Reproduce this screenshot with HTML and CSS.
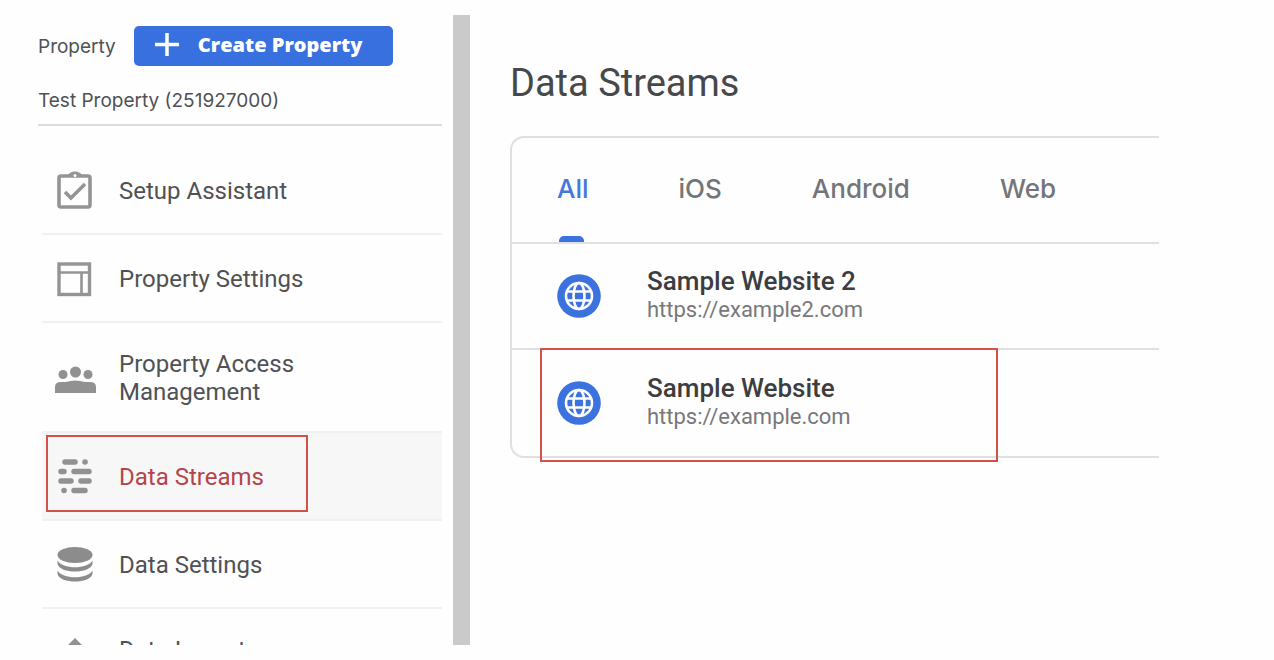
FILE: index.html
```
<!DOCTYPE html>
<html lang="en">
<head>
    <meta charset="UTF-8">
    <meta name="viewport" content="width=device-width, initial-scale=1.0">
    <title>Data Streams</title>
    <link rel="stylesheet" href="styles.css">
</head>
<body>
    <div class="page">
        <!-- Property column -->
        <aside class="sidebar">
            <div class="property-header">
                <span class="property-label">Property</span>
                <button class="create-btn" type="button">
                    <svg width="26" height="26" viewBox="0 0 26 26" aria-hidden="true"><path d="M13 1v23M1 12.500h24" fill="none" stroke="#fff" stroke-width="3.500"/></svg>
                    Create Property
                </button>
            </div>
            <div class="property-name">Test Property (251927000)</div>

            <nav class="menu">
                <a class="menu-item" href="#setup">
                    <svg class="menu-icon" viewBox="0 0 46 46" aria-hidden="true">
                        <rect x="7" y="9" width="31" height="31" rx="2" fill="none" stroke="#949494" stroke-width="3.600"/>
                        <path d="M16 9c1-6 13-6 14 0z" fill="#949494"/>
                        <circle cx="23" cy="8.500" r="1.500" fill="#fff"/>
                        <path d="M13 25l6 6 14-14" fill="none" stroke="#949494" stroke-width="3.600"/>
                    </svg>
                    <span>Setup Assistant</span>
                </a>
                <a class="menu-item" href="#settings">
                    <svg class="menu-icon" viewBox="0 0 46 46" fill="none" stroke="#949494" aria-hidden="true">
                        <rect x="7" y="9" width="30.500" height="30.500" stroke-width="3.400"/>
                        <path d="M7 17.500h31M29.500 17.500V40" stroke-width="2.600"/>
                    </svg>
                    <span>Property Settings</span>
                </a>
                <a class="menu-item" href="#access">
                    <svg class="menu-icon" viewBox="0 0 46 46" fill="#919191" aria-hidden="true">
                        <circle cx="11" cy="20.500" r="4.500"/>
                        <circle cx="23.500" cy="18" r="5.500"/>
                        <circle cx="36" cy="20.500" r="4.500"/>
                        <path d="M3 39v-6q0-5 6-5h5q9-3 19 0h5q6 0 6 5v6z"/>
                    </svg>
                    <span>Property Access Management</span>
                </a>
                <a class="menu-item active" href="#streams">
                    <svg class="menu-icon" viewBox="0 0 46 46" aria-hidden="true">
                        <path d="M13 9h10M33 9h.1M9 18.500h3M22 18.500h15M9 28h10M29 28h8M12 37.500h.1M22 37.500h11" fill="none" stroke="#919191" stroke-width="5.500" stroke-linecap="round"/>
                    </svg>
                    <span>Data Streams</span>
                </a>
                <a class="menu-item" href="#data-settings">
                    <svg class="menu-icon" viewBox="0 0 46 46" fill="#8c8c8c" aria-hidden="true">
                        <ellipse cx="23" cy="14" rx="17.500" ry="8"/>
                        <path d="M5.500 19.500C10 28.500 36 28.500 40.500 19.500v3.500C38 33 8 33 5.500 23z"/>
                        <path d="M5.500 29.500C10 38.500 36 38.500 40.500 29.500v3.500C38 43 8 43 5.500 33z"/>
                    </svg>
                    <span>Data Settings</span>
                </a>
                <a class="menu-item" href="#import">
                    <svg class="menu-icon" viewBox="0 0 46 46" fill="#919191" aria-hidden="true">
                        <path d="M23 12L9 26h8v10h12V26h8zM9 39h28v4H9z"/>
                    </svg>
                    <span>Data Import</span>
                </a>
            </nav>
        </aside>

        <!-- Streams -->
        <main class="content">
            <h1>Data Streams</h1>
            <section class="card">
                <div class="tabs" role="tablist">
                    <button class="tab selected" type="button" role="tab" aria-selected="true">All</button>
                    <button class="tab" type="button" role="tab" aria-selected="false">iOS</button>
                    <button class="tab" type="button" role="tab" aria-selected="false">Android</button>
                    <button class="tab" type="button" role="tab" aria-selected="false">Web</button>
                </div>
                <a class="stream" href="#sample-website-2">
                    <svg class="stream-icon" viewBox="0 0 44 44" aria-hidden="true">
                        <circle cx="22" cy="22" r="21.800" fill="#3b72de"/>
                        <g fill="none" stroke="#fff" stroke-width="2.600">
                            <circle cx="22" cy="22" r="13"/>
                            <ellipse cx="22" cy="22" rx="5.500" ry="13"/>
                            <path d="M10 17.500h24M10 26.500h24"/>
                        </g>
                    </svg>
                    <span class="stream-text">
                        <span class="stream-name">Sample Website 2</span>
                        <span class="stream-url">https://example2.com</span>
                    </span>
                </a>
                <a class="stream marked" href="#sample-website">
                    <svg class="stream-icon" viewBox="0 0 44 44" aria-hidden="true">
                        <circle cx="22" cy="22" r="21.800" fill="#3b72de"/>
                        <g fill="none" stroke="#fff" stroke-width="2.600">
                            <circle cx="22" cy="22" r="13"/>
                            <ellipse cx="22" cy="22" rx="5.500" ry="13"/>
                            <path d="M10 17.500h24M10 26.500h24"/>
                        </g>
                    </svg>
                    <span class="stream-text">
                        <span class="stream-name">Sample Website</span>
                        <span class="stream-url">https://example.com</span>
                    </span>
                </a>
            </section>
        </main>
    </div>
</body>
</html>
```
FILE: styles.css
```
*, *::after {
    box-sizing: border-box;
}
body {
    margin: 0;
    font-family: Roboto, Arial, sans-serif;
    background-color: #fefefe;
    color: #505154;
}
a {
    color: inherit;
    text-decoration: none;
}
button {
    border: none;
    cursor: pointer;
}
.page {
    display: flex;
    height: 100vh;
    padding: 15px 9% 15px 0;
}

/* Sidebar */
.sidebar {
    flex: 0 0 470px;
    padding: 11px 11px 0 38px;
    border-right: 17px solid #cacaca;
    overflow: hidden;
}
.property-header {
    display: flex;
    align-items: center;
    gap: 18px;
    font-family: Inter, sans-serif;
    font-size: 19px;
}
.create-btn {
    display: flex;
    align-items: center;
    gap: 18px;
    height: 40px;
    padding: 0 30px 3px 20px;
    border-radius: 5px;
    background-color: #3870e0;
    color: #fff;
    font-family: "Open Sans", sans-serif;
    font-size: 20px;
    font-weight: 800;
}
.property-name {
    padding: 20px 0 8px;
    border-bottom: 2px solid #dcdcdc;
    font-family: Inter, sans-serif;
    font-size: 19px;
    line-height: 30px;
}
.menu {
    margin: 21px 0 0 4px;
}
.menu-item {
    position: relative;
    display: flex;
    align-items: center;
    gap: 21px;
    min-height: 88px;
    padding: 27px 100px 25px 10px;
    border-bottom: 2px solid #f0f0f0;
    font-size: 24px;
    line-height: 28px;
}
.menu-item:last-child {
    padding-top: 24px;
    padding-bottom: 28px;
}
.menu-icon {
    flex: none;
    width: 46px;
    height: 46px;
    margin: -11px 0 -9px;
}
.menu-item.active {
    background-color: #f7f7f7;
    color: #b5444a;
}
.menu-item.active::after {
    content: "";
    position: absolute;
    top: 2px;
    left: 4px;
    width: 262px;
    height: 77px;
    border: 2px solid #d6504a;
}

/* Streams */
.content {
    flex: 1;
    padding: 44px 0 0 40px;
}
h1 {
    margin: 0 0 29px;
    font-size: 38px;
    font-weight: 400;
    line-height: 48px;
    color: #47484a;
}
.card {
    border: 2px solid #e0e0e0;
    border-right: none;
    border-radius: 14px 0 0 14px;
}
.tabs {
    display: flex;
    gap: 90px;
    height: 106px;
    padding-left: 45px;
    border-bottom: 2px solid #e0e0e0;
}
.tab {
    position: relative;
    padding: 0 0 4px;
    background: none;
    color: #757578;
    font-family: Inter, sans-serif;
    font-size: 26px;
    font-weight: 500;
}
.tab.selected {
    color: #4677dd;
}
.tab.selected::after {
    content: "";
    position: absolute;
    bottom: 0;
    left: 2px;
    width: 25px;
    height: 6px;
    border-radius: 5px 5px 0 0;
    background-color: #3b72de;
}
.stream {
    position: relative;
    display: flex;
    align-items: center;
    gap: 46px;
    height: 104px;
    padding-left: 45px;
}
.stream + .stream {
    height: 108px;
    border-top: 2px solid #e0e0e0;
}
.stream-icon {
    width: 44px;
    height: 44px;
}
.stream-text {
    display: flex;
    flex-direction: column;
    padding-bottom: 2px;
}
.stream-name {
    font-size: 26px;
    font-weight: 500;
    line-height: 30px;
    color: #3c3d40;
}
.stream-url {
    font-size: 22px;
    line-height: 28px;
    color: #77787b;
}
.stream.marked::after {
    content: "";
    position: absolute;
    top: -2px;
    left: 28px;
    width: 458px;
    height: 114px;
    border: 2px solid #d6504a;
}
```
